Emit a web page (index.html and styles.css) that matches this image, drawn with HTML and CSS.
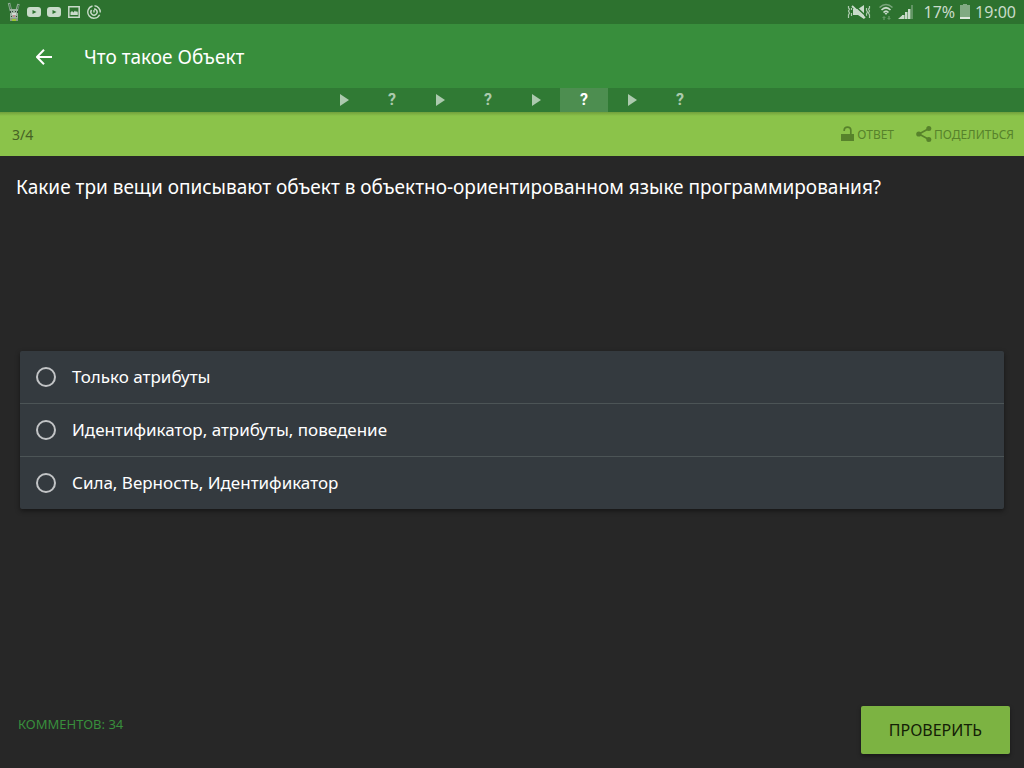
FILE: index.html
```html
<!DOCTYPE html>
<html lang="ru">
<head>
<meta charset="utf-8">
<meta name="viewport" content="width=device-width, initial-scale=1">
<title>Что такое Объект</title>
<link rel="stylesheet" href="styles.css">
</head>
<body>
<div class="status">
  <div class="notices">
    <svg width="14" height="20" viewBox="0 0 14 20" aria-hidden="true"><path d="M2 1l2 8M11.500 2L9.500 9" stroke="#8fb195" stroke-width="2.500"/><path d="M2.500 2l1 5M11.500 3l-1 4" stroke="#3a5d40" stroke-width=".8"/><path d="M3 7h8v9H3z" fill="#9db3a1"/><path d="M3 9h1v2H3zM10 9h1v2h-1zM5 9h1v1H5zM8 9h1v1H8zM4 14h1v1H4zM9 14h1v1H9z" fill="#31493a"/><path d="M5 11h4v2H5z" fill="#d3d9d4"/><path d="M6 13h2v2H6z" fill="#c58b91"/><path d="M3 16h8v3H3z" fill="#8a9f86"/><path d="M5 17h4v2H5z" fill="#9bc52f"/></svg>
    <svg width="14" height="12" viewBox="0 0 14 12" aria-hidden="true"><rect y="1" width="14" height="10" rx="3" fill="#c9dbca"/><path d="M5.500 4l4 2-4 2z" fill="#2d722f"/></svg>
    <svg width="14" height="12" viewBox="0 0 14 12" aria-hidden="true"><rect y="1" width="14" height="10" rx="3" fill="#c9dbca"/><path d="M5.500 4l4 2-4 2z" fill="#2d722f"/></svg>
    <svg width="14" height="14" viewBox="0 0 14 14" aria-hidden="true"><path d="M1.800 1.800h10.400v10.400H1.800z" fill="none" stroke="#c9dbca" stroke-width="1.500"/><path d="M3.500 10V7.500L5 6l1.500 1.500L8 5.500l1 1.500 1-1 .8 1.500V10z" fill="#c9dbca"/></svg>
    <svg width="14" height="14" viewBox="0 0 14 14" fill="none" stroke="#c9dbca" stroke-width="1.400" aria-hidden="true"><path d="M5.500 1A6.200 6.200 0 1 0 12.600 9.700M7.500 .8A6.200 6.200 0 0 1 13.200 7.500"/><path d="M4.600 5a3.100 3.100 0 1 0 4.800 0Q8.500 4 7 4"/><path d="M7 5v2.500"/></svg>
  </div>
  <div class="system">
    <svg width="24" height="16" viewBox="0 0 24 16" aria-hidden="true"><path d="M1.500 2v2l1 1-1 2 1 2-1 2v3M4.500 4v2M4.500 9v3M19.500 4v2l1 2-1 2v2M22.500 2v2l-1 1 1 2-1 2 1 2v3" fill="none" stroke="#aecbb0" stroke-width="1.200"/><path d="M6 5h5l6-4v14l-6-4H6z" fill="#c9dbca"/><path d="M7 1l12 11" stroke="#2d722f" stroke-width="1.500"/><path d="M5 2l13 12" stroke="#c9dbca" stroke-width="1.800"/></svg>
    <svg width="14" height="18" viewBox="0 0 14 18" fill="none" aria-hidden="true"><path d="M.5 4.500Q7-1.500 13.500 4.500" stroke="#79a57b" stroke-width="1.500"/><path d="M2.500 7Q7 2.500 11.500 7M4.500 9.500Q7 7 9.500 9.500" stroke="#c9dbca" stroke-width="1.700"/><path d="M5.500 10h3L7 12z" fill="#c9dbca"/><path d="M3 15l2-2 2 2H5.700v2H4.300v-2zM8 15h1.300v-2h1.400v2H12l-2 2z" fill="#649765"/></svg>
    <svg width="16" height="16" viewBox="0 0 16 16" aria-hidden="true"><path d="M0 15l4-3.500V15zM4 11h2.500v4H4zM7 8h2.500v7H7zM10 5h2.500v10H10z" fill="#c9dbca"/><path d="M13 1h2v14h-2z" fill="#629564"/></svg>
    <span class="percent">17%</span>
    <svg width="10" height="16" viewBox="0 0 10 16" aria-hidden="true"><path d="M3 0h4v1h3v13H0V1h3z" fill="#80aa82"/><path d="M0 13h10v2H0z" fill="#dce8dc"/></svg>
    <time class="clock">19:00</time>
  </div>
</div>
<header class="appbar">
  <button class="back" aria-label="Назад"><svg width="16" height="16" viewBox="0 0 16 16" fill="none" stroke="#fff" stroke-width="2"><path d="M16 8H1.500M8 .8L.9 8 8 15.200"/></svg></button>
  <h1 class="title">Что такое Объект</h1>
</header>
<nav class="steps" aria-label="Шаги урока">
  <button class="step" aria-label="Видео 1"><svg width="10" height="12" viewBox="0 0 10 12"><path d="M1 0l9 6-9 6z" fill="currentColor"/></svg></button>
  <button class="step">?</button>
  <button class="step" aria-label="Видео 2"><svg width="10" height="12" viewBox="0 0 10 12"><path d="M1 0l9 6-9 6z" fill="currentColor"/></svg></button>
  <button class="step">?</button>
  <button class="step" aria-label="Видео 3"><svg width="10" height="12" viewBox="0 0 10 12"><path d="M1 0l9 6-9 6z" fill="currentColor"/></svg></button>
  <button class="step step-active" aria-current="step">?</button>
  <button class="step" aria-label="Видео 4"><svg width="10" height="12" viewBox="0 0 10 12"><path d="M1 0l9 6-9 6z" fill="currentColor"/></svg></button>
  <button class="step">?</button>
</nav>
<div class="toolbar">
  <span class="count">3/4</span>
  <div class="actions">
    <button class="action"><svg width="14" height="16" viewBox="0 0 14 16"><path d="M3.200 5V4Q3.200 1.200 6.500 1.200T9.800 4v4" fill="none" stroke="currentColor" stroke-width="1.700"/><path d="M0 8h13v7H0z" fill="currentColor"/></svg><span>ОТВЕТ</span></button>
    <button class="action"><svg width="16" height="16" viewBox="0 0 16 16"><path d="M13 2.500L3 8l10 5.500" fill="none" stroke="currentColor" stroke-width="1.700"/><g fill="currentColor"><circle cx="2.800" cy="8" r="2.600"/><circle cx="12.800" cy="2.600" r="2.500"/><circle cx="12.800" cy="13.400" r="2.500"/></g></svg><span>ПОДЕЛИТЬСЯ</span></button>
  </div>
</div>
<main class="quiz">
  <h2 class="question" id="question">Какие три вещи описывают объект в объектно-ориентированном языке программирования?</h2>
  <div class="options" role="radiogroup" aria-labelledby="question">
    <label class="option"><input class="radio" type="radio" name="answer"><span>Только атрибуты</span></label>
    <label class="option"><input class="radio" type="radio" name="answer"><span>Идентификатор, атрибуты, поведение</span></label>
    <label class="option"><input class="radio" type="radio" name="answer"><span>Сила, Верность, Идентификатор</span></label>
  </div>
</main>
<footer class="footer">
  <a class="comments" href="#comments">КОММЕНТОВ: 34</a>
  <button class="check">ПРОВЕРИТЬ</button>
</footer>
</body>
</html>
```
FILE: styles.css
```css
* { box-sizing: border-box; }
body {
  margin: 0;
  min-height: 100vh;
  display: flex;
  flex-direction: column;
  background: #272727;
  color: #fff;
  font-family: "Noto Sans", "Open Sans", sans-serif;
}
button { border: 0; padding: 0; background: none; color: inherit; font: inherit; cursor: pointer; }
svg { display: block; flex: none; }

.status {
  display: flex;
  align-items: center;
  justify-content: space-between;
  height: 24px;
  padding: 0 8px 0 7px;
  background: #2d722f;
  color: #c9dbca;
}
.notices { display: flex; align-items: center; gap: 6px; }
.system { display: flex; align-items: center; gap: 5px; font-size: 16px; line-height: 24px; }
.percent { margin-left: 4px; }
.system svg:first-child { margin-right: 3px; }

.appbar {
  display: flex;
  align-items: center;
  gap: 24px;
  height: 64px;
  padding: 1px 28px 0;
  background: #388e3c;
}
.back { display: grid; place-items: center; width: 32px; height: 32px; }
.title { margin: 0; font-size: 19px; font-weight: 400; line-height: 24px; }

.steps {
  display: flex;
  justify-content: center;
  height: 24px;
  background: #307a34;
}
.step {
  display: grid;
  place-items: center;
  width: 48px;
  color: #accaae;
  font-family: Roboto, sans-serif;
  font-size: 16px;
  font-weight: 700;
  line-height: 24px;
}
.step-active { background: #4d8e50; color: #fff; }

.toolbar {
  display: flex;
  align-items: center;
  justify-content: space-between;
  height: 44px;
  padding: 0 10px 0 12px;
  background: linear-gradient(#719f3c, #8bc34a 4px);
  color: #57822b;
}
.count { font-size: 14px; color: #466225; }
.actions { display: flex; gap: 22px; font-size: 12px; }
.action { display: flex; align-items: center; gap: 2px; }

.quiz { flex: 1; display: flex; flex-direction: column; }
.quiz::after { content: ""; flex: 1 0 62px; }
.question {
  flex: 1 0 62px;
  margin: 0;
  padding: 18px 16px;
  font-size: 19px;
  font-weight: 400;
  line-height: 26px;
}
.options {
  margin: 0 20px;
  border-radius: 2px;
  background: #343a3f;
  box-shadow: 0 2px 5px rgba(0, 0, 0, .45);
}
.option {
  display: flex;
  align-items: center;
  gap: 16px;
  min-height: 52px;
  padding: 0 16px;
  font-size: 17px;
  line-height: 24px;
}
.option + .option { min-height: 53px; border-top: 1px solid #4c5456; }
.radio {
  appearance: none;
  flex: none;
  width: 20px;
  height: 20px;
  margin: 0;
  border: 2px solid #c2c4c6;
  border-radius: 50%;
}
.radio:checked { background: radial-gradient(#8bc34a 5px, transparent 6px); }

.footer {
  display: flex;
  align-items: center;
  justify-content: space-between;
  padding: 2px 14px 14px 18px;
}
.comments { margin-bottom: 12px; color: #388e3c; font-size: 13px; line-height: 18px; text-decoration: none; }
.check {
  height: 48px;
  padding: 0 28px;
  border-radius: 2px;
  background: #7cb342;
  box-shadow: 0 2px 4px rgba(0, 0, 0, .4);
  color: #142006;
  font-size: 16px;
}
```
